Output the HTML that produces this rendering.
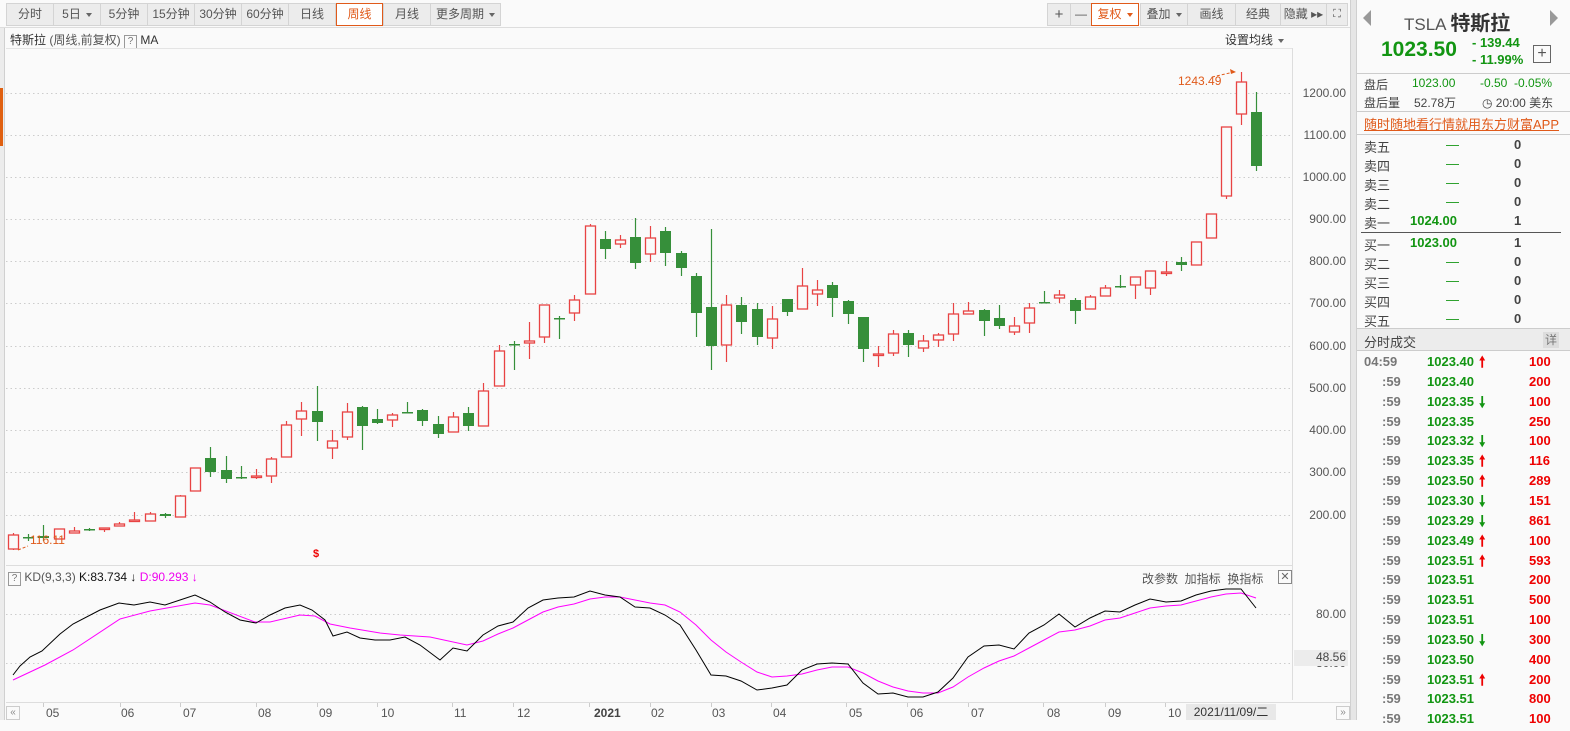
<!DOCTYPE html>
<html><head><meta charset="utf-8">
<style>
*{margin:0;padding:0;box-sizing:border-box}
body{width:1570px;height:720px;overflow:hidden;background:#fafafa;font-family:"Liberation Sans","Noto Sans CJK SC",sans-serif;font-size:12px;color:#333;position:relative}
.abs{position:absolute}
.tb{position:absolute;top:3px;height:23px;border:1px solid #d4d4d4;background:#ececec;color:#555;font-size:12px;line-height:21px;text-align:center}
.tb.sel{background:#fff;border:1px solid #e05a1a;color:#e05a1a}
.dd::after{content:"";display:inline-block;margin-left:5px;border-left:3px solid transparent;border-right:3px solid transparent;border-top:4px solid #666;vertical-align:middle}
.sel.dd::after{border-top-color:#e05a1a}
.ax{position:absolute;left:1300px;width:46px;text-align:right;font-size:12px;color:#555}
.rp{position:absolute;left:1357px;width:213px}
.ob{position:absolute;left:1364px;font-size:13px;color:#444}
.g{color:#129512}
.r{color:#e00}
.tr{position:absolute;left:1357px;width:200px;height:20px;font-size:13px;font-weight:bold}
.tr span{position:absolute}
.d{position:absolute;top:706px;font-size:12px;color:#555}
</style></head><body>
<!-- toolbar -->
<div class="tb" style="left:6px;width:48px">分时</div>
<div class="tb dd" style="left:53px;width:48px">5日</div>
<div class="tb" style="left:100px;width:48px">5分钟</div>
<div class="tb" style="left:147px;width:48px">15分钟</div>
<div class="tb" style="left:194px;width:48px">30分钟</div>
<div class="tb" style="left:241px;width:48px">60分钟</div>
<div class="tb" style="left:288px;width:48px">日线</div>
<div class="tb sel" style="left:336px;width:47px">周线</div>
<div class="tb" style="left:383px;width:48px">月线</div>
<div class="tb dd" style="left:430px;width:71px">更多周期</div>
<div class="tb" style="left:1047px;width:24px;font-size:15px">+</div>
<div class="tb" style="left:1070px;width:22px">—</div>
<div class="tb sel dd" style="left:1091px;width:48px">复权</div>
<div class="tb dd" style="left:1140px;width:48px">叠加</div>
<div class="tb" style="left:1187px;width:49px">画线</div>
<div class="tb" style="left:1235px;width:46px">经典</div>
<div class="tb" style="left:1280px;width:47px">隐藏 ▸▸</div>
<div class="tb" style="left:1326px;width:22px;font-size:11px">⛶</div>
<div class="abs" style="left:0;top:27px;width:1350px;height:1px;background:#ddd"></div>
<div class="abs" style="left:10px;top:31px;font-size:12px;color:#333">特斯拉 <span style="color:#555">(周线,前复权)</span> <span style="display:inline-block;border:1px solid #999;width:13px;height:14px;line-height:12px;text-align:center;font-size:10px;color:#777">?</span> MA</div>
<div class="abs dd" style="left:1225px;top:31px;font-size:12px;color:#333">设置均线</div>
<div class="abs" style="left:6px;top:48px;width:1286px;height:1px;background:#e4e4e4"></div>
<div class="abs" style="left:0;top:28px;width:5px;height:692px;background:#ececec;border-right:1px solid #d0d0d0"></div>
<div class="abs" style="left:0;top:88px;width:3px;height:58px;background:#e06010"></div>
<!-- axis -->
<div class="abs" style="left:1292px;top:48px;width:1px;height:652px;background:#ddd"></div>
<div class="ax" style="top:86px">1200.00</div>
<div class="ax" style="top:128px">1100.00</div>
<div class="ax" style="top:170px">1000.00</div>
<div class="ax" style="top:212px">900.00</div>
<div class="ax" style="top:254px">800.00</div>
<div class="ax" style="top:296px">700.00</div>
<div class="ax" style="top:339px">600.00</div>
<div class="ax" style="top:381px">500.00</div>
<div class="ax" style="top:423px">400.00</div>
<div class="ax" style="top:465px">300.00</div>
<div class="ax" style="top:508px">200.00</div>
<div class="ax" style="top:607px">80.00</div>
<div class="ax" style="top:656px">30.00</div>
<div class="abs" style="left:1294px;top:650px;width:54px;height:16px;background:#ececec;text-align:right;font-size:12px;color:#444;padding-right:2px">48.56</div>
<svg class="abs" style="left:0;top:0" width="1292" height="720" id="ch">
</svg>
<div class="abs" style="left:1178px;top:74px;font-size:12px;color:#e05a1a">1243.49</div>
<div class="abs" style="left:30px;top:533px;font-size:12px;color:#e05a1a">116.11</div>
<div class="abs" style="left:313px;top:548px;font-size:11px;color:#e00;font-weight:bold">$</div>
<!-- KD -->
<div class="abs" style="left:6px;top:565px;width:1286px;height:1px;background:#ddd"></div>
<div class="abs" style="left:8px;top:570px;font-size:12px;color:#555"><span style="display:inline-block;border:1px solid #999;width:13px;height:14px;line-height:12px;text-align:center;font-size:10px;color:#777">?</span> KD(9,3,3) <span style="color:#111">K:83.734 ↓</span> <span style="color:#e0e">D:90.293 ↓</span></div>
<div class="abs" style="left:1142px;top:570px;font-size:12px;color:#555">改参数 &nbsp;加指标 &nbsp;换指标</div>
<div class="abs" style="left:1278px;top:570px;width:14px;height:14px;border:1px solid #888;font-size:11px;line-height:12px;text-align:center;color:#666">✕</div>
<div class="abs" style="left:6px;top:702px;width:1344px;height:1px;background:#ddd"></div>
<div class="abs" style="left:6px;top:706px;width:14px;height:14px;border:1px solid #ccc;font-size:10px;color:#888;line-height:12px;text-align:center">«</div>
<div class="d" style="left:46px">05</div><div class="d" style="left:121px">06</div><div class="d" style="left:183px">07</div><div class="d" style="left:258px">08</div><div class="d" style="left:319px">09</div><div class="d" style="left:381px">10</div><div class="d" style="left:454px">11</div><div class="d" style="left:517px">12</div><div class="d" style="left:594px;font-weight:bold;color:#444">2021</div><div class="d" style="left:651px">02</div><div class="d" style="left:712px">03</div><div class="d" style="left:773px">04</div><div class="d" style="left:849px">05</div><div class="d" style="left:910px">06</div><div class="d" style="left:971px">07</div><div class="d" style="left:1047px">08</div><div class="d" style="left:1108px">09</div><div class="d" style="left:1168px">10</div>
<div class="abs" style="left:1186px;top:704px;width:90px;height:16px;background:#e8e8e8;font-size:12px;color:#333;text-align:center;line-height:16px">2021/11/09/二</div>
<div class="abs" style="left:1336px;top:706px;width:14px;height:14px;border:1px solid #ccc;font-size:10px;color:#888;line-height:12px;text-align:center">»</div>
<!-- separator -->
<div class="abs" style="left:1350px;top:0;width:7px;height:720px;background:#e6e6e6;border-left:1px solid #d0d0d0;border-right:1px solid #d0d0d0"></div>
<!-- right panel -->
<div class="abs" style="left:1363px;top:10px;width:0;height:0;border-top:8px solid transparent;border-bottom:8px solid transparent;border-right:8px solid #999"></div>
<div class="abs" style="left:1550px;top:10px;width:0;height:0;border-top:8px solid transparent;border-bottom:8px solid transparent;border-left:8px solid #999"></div>
<div class="abs" style="left:1404px;top:7px;font-size:17px;color:#555">TSLA <b style="font-size:20px;color:#333">特斯拉</b></div>
<div class="abs g" style="left:1381px;top:38px;font-size:21px;font-weight:bold">1023.50</div>
<div class="abs g" style="left:1472px;top:35px;font-size:13px;font-weight:bold">- 139.44</div>
<div class="abs g" style="left:1472px;top:52px;font-size:13px;font-weight:bold">- 11.99%</div>
<div class="abs" style="left:1533px;top:45px;width:18px;height:18px;border:1px solid #666;text-align:center;line-height:15px;font-size:16px;color:#555">+</div>
<div class="abs" style="left:1357px;top:73px;width:213px;height:1px;background:#ccc"></div>
<div class="ob" style="top:76px;font-size:12px">盘后</div>
<div class="ob g" style="left:1412px;top:76px;font-size:12px">1023.00</div>
<div class="ob g" style="left:1480px;top:76px;font-size:12px">-0.50 &nbsp;-0.05%</div>
<div class="ob" style="top:94px;font-size:12px">盘后量</div>
<div class="ob" style="left:1414px;top:94px;font-size:12px">52.78万</div>
<div class="ob" style="left:1482px;top:94px;font-size:12px">◷ 20:00 美东</div>
<div class="abs" style="left:1357px;top:111px;width:213px;height:1px;background:#ccc"></div>
<div class="abs" style="left:1364px;top:114px;font-size:13px;color:#e05a1a;text-decoration:underline">随时随地看行情就用东方财富APP</div>
<div class="abs" style="left:1357px;top:134px;width:213px;height:1px;background:#ccc"></div>
<div class="ob" style="top:137px">卖五</div><div class="ob g" style="left:1446px;top:137px">—</div><div class="ob" style="left:1514px;top:137px;font-weight:bold">0</div>
<div class="ob" style="top:156px">卖四</div><div class="ob g" style="left:1446px;top:156px">—</div><div class="ob" style="left:1514px;top:156px;font-weight:bold">0</div>
<div class="ob" style="top:175px">卖三</div><div class="ob g" style="left:1446px;top:175px">—</div><div class="ob" style="left:1514px;top:175px;font-weight:bold">0</div>
<div class="ob" style="top:194px">卖二</div><div class="ob g" style="left:1446px;top:194px">—</div><div class="ob" style="left:1514px;top:194px;font-weight:bold">0</div>
<div class="ob" style="top:213px">卖一</div><div class="ob g" style="left:1410px;top:213px;font-weight:bold">1024.00</div><div class="ob" style="left:1514px;top:213px;font-weight:bold">1</div>
<div class="abs" style="left:1361px;top:232px;width:200px;height:1px;background:#555"></div>
<div class="ob" style="top:235px">买一</div><div class="ob g" style="left:1410px;top:235px;font-weight:bold">1023.00</div><div class="ob" style="left:1514px;top:235px;font-weight:bold">1</div>
<div class="ob" style="top:254px">买二</div><div class="ob g" style="left:1446px;top:254px">—</div><div class="ob" style="left:1514px;top:254px;font-weight:bold">0</div>
<div class="ob" style="top:273px">买三</div><div class="ob g" style="left:1446px;top:273px">—</div><div class="ob" style="left:1514px;top:273px;font-weight:bold">0</div>
<div class="ob" style="top:292px">买四</div><div class="ob g" style="left:1446px;top:292px">—</div><div class="ob" style="left:1514px;top:292px;font-weight:bold">0</div>
<div class="ob" style="top:311px">买五</div><div class="ob g" style="left:1446px;top:311px">—</div><div class="ob" style="left:1514px;top:311px;font-weight:bold">0</div>
<div class="abs" style="left:1357px;top:328px;width:213px;height:23px;background:#ececec;border-top:1px solid #ccc;border-bottom:1px solid #ccc"></div>
<div class="ob" style="top:332px">分时成交</div>
<div class="abs" style="left:1543px;top:332px;width:16px;height:16px;background:#ddd;font-size:12px;color:#777;text-align:center;line-height:16px">详</div>
<div id="trades"></div>
<script>
var S='http://www.w3.org/2000/svg',svg=document.getElementById('ch');
function el(n,a){var e=document.createElementNS(S,n);for(var k in a)e.setAttribute(k,a[k]);svg.appendChild(e);return e;}
[93,135,177,219,261,303,346,388,430,472,515,614,663].forEach(function(y){el('line',{x1:6,x2:1292,y1:y+.5,y2:y+.5,stroke:'#ccc','stroke-dasharray':'1.5,3'});});
var C=[[13,533,535,549,550,'r'],[28,534,537,537,541,'g'],[43,525,536,538,541,'g'],[59,529,529,539,539,'r'],[74,527,531,533,533,'r'],[89,528,529,529,531,'g'],[104,528,528,528,532,'r'],[119,522,524,526,526,'r'],[134,512,520,521,521,'r'],[150,512,514,521,521,'r'],[165,513,514,516,518,'g'],[180,495,496,517,517,'r'],[195,468,468,491,491,'r'],[210,447,458,472,477,'g'],[226,456,470,479,483,'g'],[241,466,477,477,479,'g'],[256,469,476,476,479,'r'],[271,457,459,476,483,'r'],[286,421,425,457,457,'r'],[301,402,411,419,436,'r'],[317,386,411,422,441,'g'],[332,430,441,448,459,'r'],[347,403,412,437,440,'r'],[362,406,407,426,450,'g'],[377,409,419,423,424,'g'],[392,413,415,420,427,'r'],[407,402,412,412,413,'g'],[422,409,410,421,426,'g'],[438,416,424,434,438,'g'],[453,412,417,432,432,'r'],[468,407,413,426,431,'g'],[483,383,391,426,426,'r'],[499,345,351,386,386,'r'],[514,341,344,344,370,'g'],[529,322,341,343,359,'r'],[544,305,305,337,343,'r'],[559,316,318,318,339,'g'],[574,295,300,313,321,'r'],[590,224,226,294,294,'r'],[605,231,239,249,259,'g'],[620,235,240,244,248,'r'],[635,218,237,263,269,'g'],[650,226,238,254,262,'r'],[665,227,231,253,266,'g'],[681,251,253,268,276,'g'],[696,273,276,313,337,'g'],[711,229,307,346,370,'g'],[726,295,305,345,362,'r'],[741,297,305,322,334,'g'],[757,303,309,337,345,'g'],[772,306,319,338,349,'r'],[787,299,299,312,316,'g'],[802,268,286,309,309,'r'],[817,280,290,294,306,'r'],[832,282,285,298,317,'g'],[848,300,301,314,324,'g'],[863,317,317,349,362,'g'],[878,346,354,355,367,'r'],[893,330,334,353,356,'r'],[908,330,333,345,357,'g'],[923,335,341,348,352,'r'],[938,333,335,340,347,'r'],[953,303,314,334,341,'r'],[968,302,311,314,314,'r'],[984,309,310,321,336,'g'],[999,305,318,326,329,'g'],[1014,317,326,332,335,'r'],[1029,303,308,323,333,'r'],[1044,291,302,302,302,'g'],[1059,290,295,298,303,'r'],[1075,298,300,311,324,'g'],[1090,295,297,309,309,'r'],[1105,285,288,296,296,'r'],[1120,275,286,286,288,'g'],[1135,277,277,285,299,'r'],[1150,271,271,288,295,'r'],[1166,261,272,272,276,'r'],[1181,257,262,265,271,'g'],[1196,242,242,265,265,'r'],[1211,214,214,238,238,'r'],[1226,127,127,196,199,'r'],[1241,72,82,114,125,'r'],[1256,92,112,166,171,'g']];
C.forEach(function(c){var x=c[0],col=c[5]=='r'?'#e84343':'#368f3a';
el('line',{x1:x+.5,x2:x+.5,y1:c[1],y2:c[4],stroke:col,'stroke-width':1.2});
var h=Math.max(c[3]-c[2],1.5);
if(c[5]=='r'){el('rect',{x:x-4.5,y:c[2],width:10,height:h,fill:'#fafafa',stroke:col,'stroke-width':1.3});}
else el('rect',{x:x-5,y:c[2],width:11,height:h,fill:col});});
el('path',{d:'M1212 77 L1234 72',stroke:'#e05a1a','stroke-dasharray':'3,2',fill:'none'});
el('path',{d:'M1236 72 l-6 -3 l1 5z',fill:'#e05a1a'});
el('path',{d:'M18 550 L28 546',stroke:'#e05a1a','stroke-dasharray':'3,2',fill:'none'});
var K=[[13,675],[20,666],[30,657],[42,651],[60,634],[73,624],[100,610],[119,603],[134,605],[150,602],[165,605],[180,600],[195,595],[210,602],[225,612],[240,620],[256,623],[270,615],[285,608],[300,605],[312,610],[325,620],[333,636],[347,632],[360,638],[375,640],[390,640],[405,637],[420,645],[440,660],[453,648],[467,651],[483,635],[498,626],[513,622],[528,608],[543,600],[558,598],[574,597],[590,591],[605,595],[620,597],[635,607],[650,608],[665,615],[680,625],[696,650],[711,675],[726,676],[741,681],[757,690],[772,688],[787,685],[802,670],[817,664],[832,663],[848,664],[863,683],[878,694],[893,693],[908,697],[923,697],[938,692],[953,678],[968,657],[984,646],[999,645],[1014,649],[1029,633],[1044,625],[1059,614],[1075,627],[1090,618],[1105,611],[1120,612],[1135,605],[1150,599],[1166,602],[1181,601],[1196,595],[1211,591],[1226,589],[1241,589],[1256,608]];
var D=[[13,680],[45,665],[73,650],[120,619],[150,611],[195,603],[210,605],[255,622],[270,622],[300,615],[315,616],[330,624],[350,628],[380,633],[400,635],[430,637],[467,645],[483,641],[498,634],[513,628],[528,620],[543,612],[558,607],[574,604],[590,599],[605,597],[620,597],[635,600],[650,603],[665,605],[680,612],[696,625],[711,640],[726,652],[741,662],[757,672],[772,677],[787,676],[802,674],[817,670],[832,667],[848,667],[863,673],[878,681],[893,687],[908,691],[923,693],[938,693],[953,687],[968,677],[984,668],[999,661],[1014,656],[1029,648],[1044,640],[1059,632],[1075,630],[1090,626],[1105,620],[1120,618],[1135,613],[1150,608],[1166,606],[1181,605],[1196,601],[1211,597],[1226,594],[1241,593],[1256,598]];
el('polyline',{points:D.join(' '),fill:'none',stroke:'#f0f','stroke-width':1});
el('polyline',{points:K.join(' '),fill:'none',stroke:'#000','stroke-width':1});
[43,120,180,256,317,377,452,513,589,650,711,771,846,907,968,1043,1105,1165].forEach(function(x){el('line',{x1:x+.5,x2:x+.5,y1:702,y2:707,stroke:'#ccc'});});
var T=[['04:59','1023.40','u','100'],[':59','1023.40','','200'],[':59','1023.35','d','100'],[':59','1023.35','','250'],[':59','1023.32','d','100'],[':59','1023.35','u','116'],[':59','1023.50','u','289'],[':59','1023.30','d','151'],[':59','1023.29','d','861'],[':59','1023.49','u','100'],[':59','1023.51','u','593'],[':59','1023.51','','200'],[':59','1023.51','','500'],[':59','1023.51','','100'],[':59','1023.50','d','300'],[':59','1023.50','','400'],[':59','1023.51','u','200'],[':59','1023.51','','800'],[':59','1023.51','','100']];
var h='';T.forEach(function(t,i){var y=354+i*19.85;
h+='<div class="tr" style="top:'+y+'px"><span style="left:'+(t[0].length>3?7:25)+'px;color:#777">'+t[0]+'</span><span class="g" style="left:70px">'+t[1]+'</span>'+(t[2]=='u'?'<span class="r" style="left:122px;font-size:15px;top:-2px">🠕</span>':t[2]=='d'?'<span class="g" style="left:122px;font-size:15px;top:-2px">🠗</span>':'')+'<span class="r" style="left:172px">'+t[3]+'</span></div>';});
document.getElementById('trades').innerHTML=h;
</script>
</body></html>
